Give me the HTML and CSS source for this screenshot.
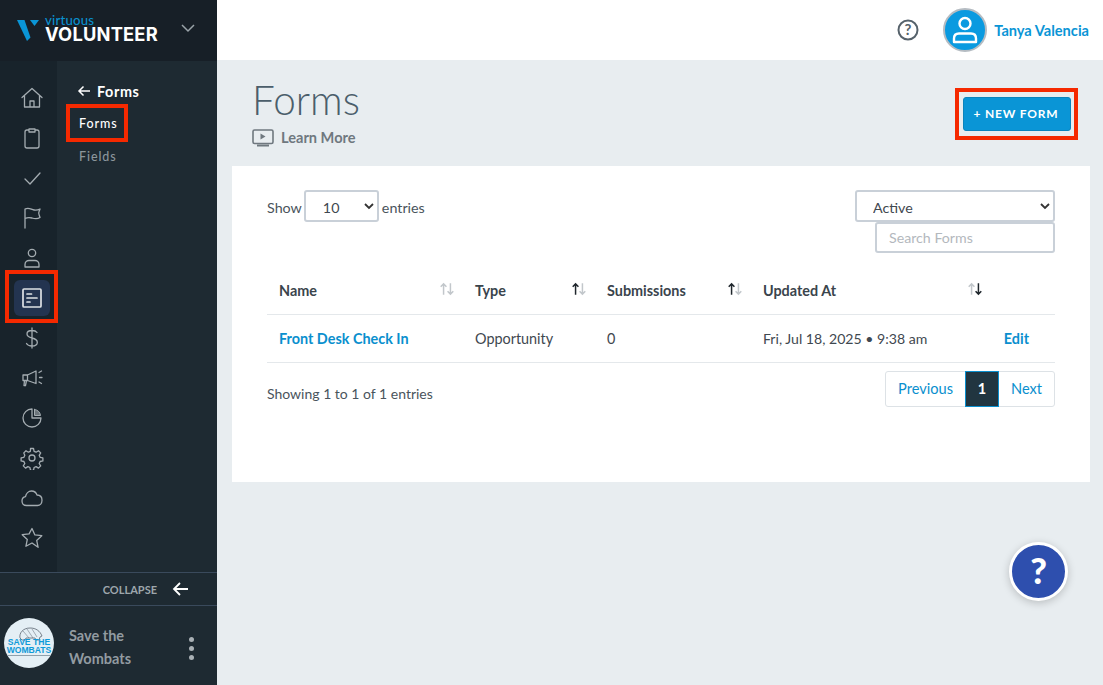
FILE: index.html
```html
<!DOCTYPE html>
<html lang="en">
<head>
<meta charset="utf-8">
<title>Forms</title>
<link rel="stylesheet" href="styles.css">
</head>
<body>
<div class="app">
  <aside class="sidebar">
    <div class="brand">
      <svg class="brand-mark" width="24" height="24" viewBox="0 0 24 24"><path fill="#0a95d6" d="M0 1h7.500l6 17.500-3.500 3.500z"/><path fill="#0a95d6" d="M13 1h9l-4.500 6z"/></svg>
      <div class="brand-text"><span class="brand-top">virtuous</span><span class="brand-name">VOLUNTEER</span></div>
      <svg class="brand-chev" width="16" height="10" viewBox="0 0 16 10"><path d="M2 2l6 6 6-6" fill="none" stroke="#9aa3a9" stroke-width="1.500"/></svg>
    </div>
    <div class="nav-wrap">
      <nav class="rail">
        <a class="rail-item"><svg viewBox="0 0 24 24"><path d="M2 11.500 12 2.500l10 9M4.500 9.500V21h15V9.500M10 21v-6h4v6"/></svg></a>
        <a class="rail-item"><svg viewBox="0 0 24 24"><path d="M9 4H7a2 2 0 0 0-2 2v14a2 2 0 0 0 2 2h10a2 2 0 0 0 2-2V6a2 2 0 0 0-2-2h-2M9 3h6v3H9z"/></svg></a>
        <a class="rail-item"><svg viewBox="0 0 24 24"><path d="M5 13l5 5L20 7"/></svg></a>
        <a class="rail-item"><svg viewBox="0 0 24 24"><path d="M5 22V3c4-2 6 .5 9 1s4 0 6-1c-1 3-2 4-1 5.500l1 3c-3 2-5 1.500-8 .5-3-.8-5-.5-7 .5"/></svg></a>
        <a class="rail-item"><svg viewBox="0 0 24 24"><circle cx="12" cy="7" r="3.700"/><path d="M5 21v-2.500C5 16 7 14.500 9 14.500h6c2 0 4 1.500 4 4V21z"/></svg></a>
        <a class="rail-item rail-active"><svg viewBox="0 0 24 24"><rect x="3" y="3" width="18" height="18" rx="1"/><path d="M7 8h4.500M7 12h10M7 16h3"/></svg></a>
        <a class="rail-item"><svg viewBox="0 0 24 24"><path d="M12 2v20M17 6.500c-1-1.500-2.500-2-5-2-3 0-5 1.300-5 3.500s2 3.200 5 4c3 .7 5.300 1.800 5.300 4.200 0 2.300-2.300 3.800-5.300 3.800-2.700 0-4.500-.8-5.500-2.500"/></svg></a>
        <a class="rail-item"><svg viewBox="0 0 24 24"><path d="M3 9h4.500L16 5v12.500L7.500 14.500H3zM4.500 14.500 4 19.500h1.500L6.500 14.500M7.500 9v5.500M19 6.500l2.500-1.500M19.500 11.500H22M19 16l2.500 1.500"/></svg></a>
        <a class="rail-item"><svg viewBox="0 0 24 24"><path d="M12 3a9 9 0 1 0 9 9h-9z"/><path class="pie-wedge" d="M14.500 3.500v6h6a7 7 0 0 0-6-6z"/></svg></a>
        <a class="rail-item"><svg viewBox="0 0 24 24"><circle cx="12" cy="12" r="3"/><path d="M10.500 2.500h3l.6 2.800 2 .9 2.400-1.500 2.200 2.200-1.500 2.400.9 2 2.800.6v3l-2.800.6-.9 2 1.500 2.400-2.200 2.200-2.400-1.500-2 .9-.6 2.800h-3l-.6-2.800-2-.9-2.400 1.500-2.200-2.200 1.500-2.400-.9-2-2.800-.6v-3l2.800-.6.9-2L3.800 6.900 6 4.700l2.400 1.500 2-.9z"/></svg></a>
        <a class="rail-item"><svg viewBox="0 0 24 24"><path d="M6.500 19.500C3.500 19.500 2 17.500 2 15c0-2.500 1.700-4 3.500-4.300C6 7.500 8.500 5 11.500 5c2.700 0 4.700 1.700 5.500 4 3 .1 5 2.300 5 5.200 0 3-2 5.300-4.500 5.300z"/></svg></a>
        <a class="rail-item"><svg viewBox="0 0 24 24"><path d="M12 2.500l2.900 6.400 6.900.8-5.100 4.700 1.400 6.900L12 17l-6.100 3.300 1.400-6.900-5.100-4.700 6.900-.8z"/></svg></a>
      </nav>
      <div class="subnav">
        <div class="subnav-title">
          <svg width="14" height="12" viewBox="0 0 14 12"><path d="M13 6H2M6.500 1.500 2 6l4.500 4.500" fill="none" stroke="#fff" stroke-width="1.500"/></svg>
          <span>Forms</span>
        </div>
        <a class="subnav-link subnav-current">Forms</a>
        <a class="subnav-link">Fields</a>
      </div>
    </div>
    <div class="collapse-row">
      <span>COLLAPSE</span>
      <svg width="16" height="14" viewBox="0 0 16 14"><path d="M16 7H2M8 1 2 7l6 6" fill="none" stroke="#fff" stroke-width="1.800"/></svg>
    </div>
    <div class="org">
      <div class="org-logo">
        <svg width="26" height="15" viewBox="0 0 26 15"><path d="M2 12C1 7 5 2 12 2c6 0 10 3 12 8l-2 1-1 3h-3l-1-2H8l-1 2H4z" fill="none" stroke="#5a6570" stroke-width=".8"/><path d="M5 5l6 7M9 3l6 9M14 3l5 8" stroke="#5a6570" stroke-width=".5"/></svg>
        <div class="org-logo-text">SAVE THE<br>WOMBATS</div>
      </div>
      <div class="org-name">Save the<br>Wombats</div>
      <div class="org-dots"><i></i><i></i><i></i></div>
    </div>
  </aside>

  <main class="main">
    <header class="topbar">
      <svg class="help-icon" width="22" height="22" viewBox="0 0 22 22"><circle cx="11" cy="11" r="9.500" fill="none" stroke="#56626b" stroke-width="2"/><text x="11" y="16" text-anchor="middle" class="help-q">?</text></svg>
      <div class="avatar">
        <svg width="30" height="32" viewBox="0 0 30 32"><circle cx="15" cy="9.500" r="5.500" fill="none" stroke="#fff" stroke-width="2.400"/><path d="M4 28v-3.500c0-3 2-5 5-5h12c3 0 5 2 5 5V28z" fill="none" stroke="#fff" stroke-width="2.400" stroke-linejoin="round"/></svg>
      </div>
      <a class="user-name">Tanya Valencia</a>
    </header>
    <div class="page">
      <div class="page-head">
        <div>
          <h1>Forms</h1>
          <a class="learn">
            <svg width="22" height="18" viewBox="0 0 22 18"><rect x="1" y="1" width="20" height="13.500" rx="1.500" fill="none" stroke="#6f787f" stroke-width="1.600"/><path d="M8.500 4.500v6l5-3z" fill="#6f787f"/><path d="M5 16.500h12" stroke="#6f787f" stroke-width="2"/></svg>
            <span>Learn More</span>
          </a>
        </div>
        <button class="new-form">+ NEW FORM</button>
      </div>
      <section class="card">
        <div class="toolbar">
          <label class="show">Show
            <select class="select select-small"><option>10</option></select>
            entries</label>
          <div class="filters">
            <select class="select select-wide"><option>Active</option></select>
            <input class="search" type="text" placeholder="Search Forms">
          </div>
        </div>
        <table class="table">
          <colgroup><col class="c1"><col class="c2"><col class="c3"><col class="c4"><col class="c5"></colgroup>
          <thead>
            <tr>
              <th><div class="th-in">Name<svg class="sort" viewBox="0 0 14 12"><path class="off" d="M4 11V2M1.500 4 4 1.500 6.500 4M10 1v9M7.500 8l2.500 2.500L12.500 8"/></svg></div></th>
              <th><div class="th-in">Type<svg class="sort" viewBox="0 0 14 12"><path class="on" d="M4 11V2M1.500 4 4 1.500 6.500 4"/><path class="off" d="M10 1v9M7.500 8l2.500 2.500L12.500 8"/></svg></div></th>
              <th><div class="th-in">Submissions<svg class="sort" viewBox="0 0 14 12"><path class="on" d="M4 11V2M1.500 4 4 1.500 6.500 4"/><path class="off" d="M10 1v9M7.500 8l2.500 2.500L12.500 8"/></svg></div></th>
              <th><div class="th-in">Updated At<svg class="sort" viewBox="0 0 14 12"><path class="off" d="M4 11V2M1.500 4 4 1.500 6.500 4"/><path class="on" d="M10 1v9M7.500 8l2.500 2.500L12.500 8"/></svg></div></th>
              <th></th>
            </tr>
          </thead>
          <tbody>
            <tr>
              <td><a class="link">Front Desk Check In</a></td>
              <td>Opportunity</td>
              <td>0</td>
              <td class="td-date">Fri, Jul 18, 2025 • 9:38 am</td>
              <td class="td-edit"><a class="link">Edit</a></td>
            </tr>
          </tbody>
        </table>
        <div class="table-foot">
          <span class="info">Showing 1 to 1 of 1 entries</span>
          <div class="pager"><a class="pager-prev">Previous</a><a class="pager-on">1</a><a class="pager-next">Next</a></div>
        </div>
      </section>
    </div>
  </main>
</div>
<button class="help-fab">?</button>
</body>
</html>
```

FILE: styles.css
```css
*, *::before, *::after { box-sizing: border-box; }
html, body { margin: 0; height: 100%; overflow: hidden; }
body { font-family: Lato, "Liberation Sans", sans-serif; font-size: 14px; color: #3c4650; background: #e8edf0; }
a { text-decoration: none; }
.app { display: flex; height: 685px; }

.sidebar { width: 217px; flex: none; display: flex; flex-direction: column; background: #1e2a32; }
.brand { height: 61px; flex: none; background: #171f27; display: flex; align-items: center; padding: 0 0 0 17px; }
.brand-mark { margin-right: 4px; }
.brand-text { display: flex; flex-direction: column; width: 135px; }
.brand-top { color: #0a8fce; font: 500 13.200px/12px Lato, sans-serif; letter-spacing: .2px; margin-top: -4px; }
.brand-name { color: #fff; font: 700 18.300px/17px Inter, sans-serif; letter-spacing: .2px; white-space: nowrap; }
.brand-chev { margin-top: -6px; }

.nav-wrap { flex: 1; display: flex; min-height: 0; }
.rail { width: 57px; background: #18232b; padding-top: 17px; display: flex; flex-direction: column; }
.rail-item { height: 40px; display: flex; align-items: center; justify-content: center; flex: none; margin: 0 7px 0 14px; }
.rail-item svg { width: 24px; height: 24px; margin-top: -1px; fill: none; stroke: #a4acb1; stroke-width: 1.300; stroke-linejoin: round; stroke-linecap: round; }
.rail-item .pie-wedge { fill: #6d767c; stroke-width: 1; }
.rail-active { position: relative; height: 36px; margin-top: 2px; margin-bottom: 2px; background: #233450; border-radius: 6px; }
.rail-item.rail-active svg { stroke: #dde1e4; stroke-width: 1.700; }
.rail-active::after { content: ""; position: absolute; left: -9px; right: -8px; top: -10px; bottom: -7px; border: 4px solid #f52900; }
.subnav { flex: 1; padding: 20px 0 0 20px; }
.subnav-title { display: flex; align-items: center; gap: 6px; color: #fff; font-weight: 700; font-size: 14.400px; letter-spacing: .6px; height: 20px; }
.subnav-link { display: block; font-size: 12.500px; font-weight: 500; letter-spacing: .9px; color: #8c969c; padding-left: 2px; line-height: 16px; width: fit-content; margin-top: 17px; }
.subnav-current { position: relative; color: #fff; margin-top: 15px; }
.subnav-current::before { content: ""; position: absolute; left: -11px; top: -12px; width: 62px; height: 38px; border: 4px solid #f52900; }

.collapse-row { height: 34px; flex: none; display: flex; align-items: center; justify-content: flex-end; gap: 15px; padding-right: 29px; border-top: 1px solid #3a4a5c; border-bottom: 1px solid #3a4a5c; color: #9da6ac; font-size: 11px; font-weight: 700; }
.org { height: 79px; flex: none; display: flex; align-items: center; padding-left: 4px; }
.org-logo { width: 50px; height: 50px; flex: none; border-radius: 50%; background: #e4eff5; display: flex; flex-direction: column; align-items: center; padding-top: 8px; overflow: hidden; margin-top: -6px; }
.org-logo svg { margin-bottom: -3px; margin-left: 4px; flex: none; }
.org-logo-text { color: #0e9ad9; font: 700 8.600px/8px "Liberation Sans", sans-serif; text-align: center; white-space: nowrap; border-bottom: 1px solid #8fa0ab; padding-bottom: 1px; }
.org-name { margin: 2px 0 0 15px; width: 120px; color: #929ba1; font-size: 14.500px; font-weight: 700; line-height: 23px; }
.org-dots { display: flex; flex-direction: column; gap: 4px; margin-top: 5px; }
.org-dots i { width: 5px; height: 5px; border-radius: 50%; background: #a9b0b5; display: block; }

.main { flex: 1; min-width: 0; display: flex; flex-direction: column; }
.topbar { height: 60px; flex: none; background: #fff; display: flex; align-items: center; justify-content: flex-end; padding-right: 14px; }
.help-q { font: 700 15px Lato, sans-serif; fill: #56626b; }
.help-icon { margin-right: 24px; }
.avatar { width: 44px; height: 44px; border-radius: 50%; background: #0a9ae0; border: 2px solid #b5bcc2; display: flex; align-items: center; justify-content: center; margin-right: 7px; }
.user-name { color: #0a95d6; font-size: 14.600px; font-weight: 700; }

.page { padding: 0 13px 0 15px; }
.page-head { height: 106px; display: flex; justify-content: space-between; padding-left: 20px; padding-right: 4px; }
h1 { font-size: 40.500px; font-weight: 300; line-height: 48px; color: #4b5e6b; margin: 17px 0 0 0; transform: translateY(-1px); }
.learn { display: flex; align-items: center; gap: 7px; color: #6f787f; font-size: 14.600px; font-weight: 700; margin-top: 3px; line-height: 20px; }
.new-form { position: relative; width: 108px; height: 34px; margin-top: 37px; margin-right: 15px; background: #0a95d6; border: 1px solid #0b84bd; border-radius: 3px; color: #fff; font: 700 12px Lato, sans-serif; letter-spacing: .8px; padding: 0 2px 2px 0; }
.new-form::after { content: ""; position: absolute; left: -9px; right: -8px; top: -10px; bottom: -10px; border: 4px solid #f52900; }

.card { height: 316px; background: #fff; padding: 24px 35px 0; }
.toolbar { display: flex; justify-content: space-between; height: 63px; }
.show { display: flex; align-items: center; gap: 2px; height: 34px; font-size: 14.300px; color: #4a545c; }
.select { appearance: none; background: #fff url("data:image/svg+xml,%3Csvg xmlns='http://www.w3.org/2000/svg' width='10' height='7'%3E%3Cpath d='M1 1l4 4 4-4' fill='none' stroke='%23333' stroke-width='1.800'/%3E%3C/svg%3E") no-repeat right 3px center; border: 2px solid #c9d0d8; border-radius: 3px; font: 400 14.300px Lato, sans-serif; color: #3f4850; padding-top: 2px; }
.select-small { width: 75px; height: 32px; padding-left: 17px; margin: -2px 1px 0 0; }
.select-wide { width: 200px; height: 32px; padding-left: 16px; }
.filters { display: flex; flex-direction: column; align-items: flex-end; }
.search { width: 180px; height: 31px; border: 2px solid #c9d0d8; border-radius: 3px; padding: 0 12px; font: 400 14.200px Lato, sans-serif; background: #fff; }
.search::placeholder { color: #b3b8bd; opacity: 1; }

.table { width: 788px; border-collapse: collapse; table-layout: fixed; margin-top: 14px; }
.c1 { width: 196px; } .c2 { width: 132px; } .c3 { width: 156px; } .c4 { width: 240px; } .c5 { width: 64px; }
th { height: 47px; padding: 0 12px; text-align: left; font-size: 14.400px; font-weight: 700; color: #3a444c; border-bottom: 1px solid #e4e8eb; }
.th-in { display: flex; justify-content: space-between; align-items: center; margin-right: -4px; }
.sort { width: 16px; height: 14px; margin-top: -3px; fill: none; stroke-width: 1.300; }
.off { stroke: #c2c7cb; }
.on { stroke: #1f262c; }
td { height: 48px; padding: 0 12px; font-size: 14.400px; color: #3f4850; border-bottom: 1px solid #e4e8eb; }
.td-date { font-size: 14.100px; }
.td-edit { text-align: right; padding-right: 26px; }
.link { color: #0a8fce; font-weight: 700; }
.table-foot { display: flex; justify-content: space-between; align-items: flex-start; margin-top: 8px; }
.info { color: #4a545c; margin-top: 13px; line-height: 20px; }
.pager { display: flex; height: 36px; border: 1px solid #dde2e6; border-radius: 3px; color: #0a8fce; width: 170px; font-size: 14.600px; }
.pager a { display: flex; align-items: center; justify-content: center; }
.pager-prev { width: 79px; }
.pager-next { width: 55px; }
.pager-on { width: 34px; background: #213540; color: #fff; font-weight: 700; border: 1px solid #0a8fce; margin: -1px 0; height: 36px; }

.help-fab { position: absolute; left: 1009px; top: 542px; width: 59px; height: 59px; border-radius: 50%; background: #2e4fae; border: 3px solid #fff; color: #fff; font: 900 36px Lato, sans-serif; box-shadow: 0 2px 8px rgba(0,0,0,.2); padding: 0 0 4px; }
```
